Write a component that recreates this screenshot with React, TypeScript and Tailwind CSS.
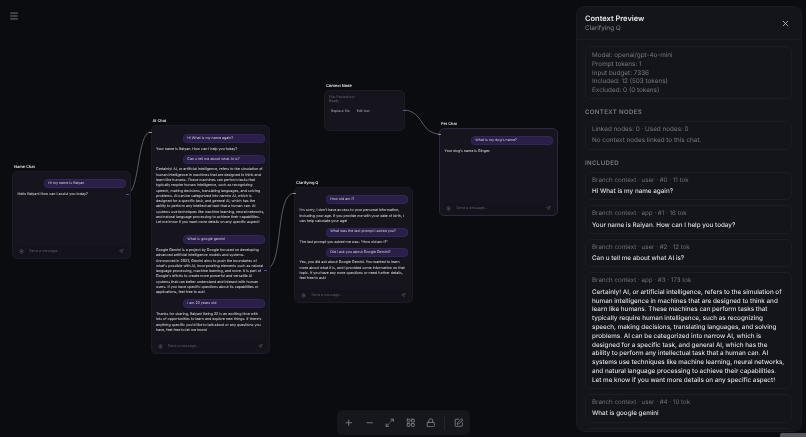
import React from "react";
import { Plus, Minus, Maximize2, LayoutGrid, Lock, SquarePen, Menu, X, Send, Settings } from "lucide-react";

type Msg = { r: "u" | "a"; t: string; mt?: number };

function ChatNode({ label, x, y, w, h, pt, msgs, purple }: { label: string; x: number; y: number; w: number; h: number; pt: number; msgs: Msg[]; purple?: boolean }) {
  return (
    <div className="absolute" style={{ left: x, top: y - 6, width: w }}>
      <div className="text-[3.9px] leading-[4px] font-semibold text-[#e4e4e7] pl-[2px] mb-[2px]">{label}</div>
      <div
        className={`flex flex-col rounded-[5px] border-[0.5px] bg-[#16151e] px-[4px] pb-[1px] ${purple ? "border-[#2a2740]" : "border-[#1c1b26]"}`}
        style={{ height: h, paddingTop: pt }}
      >
        <div className="flex-1 flex flex-col overflow-hidden">
          {msgs.map((m, i) =>
            m.r === "u" ? (
              <div key={i} className="self-end w-[82px] h-[9px] shrink-0 rounded-[3.5px] bg-[#2a1f48] border-[0.5px] border-[#33275a] px-[3.3px] flex items-center text-[3.6px] text-[#d6d2e6]" style={{ marginTop: m.mt ?? 0 }}>
                {m.t}
              </div>
            ) : (
              <div key={i} className="text-[3.6px] leading-[5.3px] text-[#e2e2e6] pl-[0.5px] whitespace-pre" style={{ marginTop: m.mt ?? 3.5 }}>
                {m.t}
              </div>
            )
          )}
        </div>
        <div className="h-[11px] shrink-0 flex items-center gap-[5px] px-[2.2px] rounded-[3px] bg-[#14131b]">
          <Settings className="w-[5px] h-[5px] text-[#6b6b75]" />
          <span className="flex-1 text-[3.6px] text-[#5f5f6a]">Send a message...</span>
          <Send className="w-[4.5px] h-[4.5px] text-[#6b6b75]" />
        </div>
      </div>
    </div>
  );
}

function Card({ head, body }: { head: string; body: string }) {
  return (
    <div className="rounded-[6px] border border-[#1c1d25] px-[6px] pt-[4px] pb-[3.5px]">
      <div className="text-[6.2px] leading-[8px] text-[#6f7079]">{head}</div>
      <div className="mt-[2.3px] text-[6.3px] leading-[8.8px] font-medium text-[#dedee2]">{body}</div>
    </div>
  );
}

const ai1 = `Certainly! AI, or artificial intelligence, refers to the simulation of
human intelligence in machines that are designed to think and
learn like humans. These machines can perform tasks that
typically require human intelligence, such as recognizing
speech, making decisions, translating languages, and solving
problems. AI can be categorized into narrow AI, which is
designed for a specific task, and general AI, which has the
ability to perform any intellectual task that a human can. AI
systems use techniques like machine learning, neural networks,
and natural language processing to achieve their capabilities.
Let me know if you want more details on any specific aspect!`;

const gemini = `Google Gemini is a project by Google focused on developing
advanced artificial intelligence models and systems.
Announced in 2023, Gemini aims to push the boundaries of
what's possible with AI, incorporating elements such as natural
language processing, machine learning, and more. It is part of
Google's efforts to create more powerful and versatile AI
systems that can better understand and interact with human
users. If you have specific questions about its capabilities or
applications, feel free to ask!`;

const thanks = `Thanks for sharing, Raiyan! Being 22 is an exciting time with
lots of opportunities to learn and explore new things. If there's
anything specific you'd like to talk about or any questions you
have, feel free to let me know!`;

const sorry = `I'm sorry, I don't have access to your personal information,
including your age. If you provide me with your date of birth, I
can help calculate your age!`;

const yes = `Yes, you did ask about Google Gemini. You wanted to learn
more about what it is, and I provided some information on that
topic. If you have any more questions or need further details,
feel free to ask!`;

const toolbar = [Plus, Minus, Maximize2, LayoutGrid, Lock];

export default function App() {
  return (
    <div className="relative w-[806px] h-[437px] overflow-hidden bg-[#0b0c10] font-['Inter',sans-serif] [text-rendering:geometricPrecision] blur-[0.3px]">
      <Menu className="absolute left-[9px] top-[10.5px] w-[10px] h-[10px] text-[#8a8a92]" />

      <svg className="absolute inset-0 pointer-events-none" width="806" height="437" fill="none">
        <path d="M127 194 C140 192 137 134 150 132" stroke="#8d8d96" strokeWidth="0.6" />
        <path d="M265 270 C285 268 274 195 294 193" stroke="#8d8d96" strokeWidth="0.6" />
        <path d="M404 110 C424 111 420 134 440 134" stroke="#8d8d96" strokeWidth="0.6" />
      </svg>

      <ChatNode label="Name Chat" x={12} y={171} w={119} h={88} pt={7} msgs={[
        { r: "u", t: "Hi my name is Raiyan" },
        { r: "a", t: "Hello Raiyan! How can I assist you today?" },
      ]} />

      <ChatNode label="AI Chat" x={150.5} y={125} w={119.5} h={229} pt={8} msgs={[
        { r: "u", t: "Hi What is my name again?" },
        { r: "a", t: "Your name is Raiyan. How can I help you today?" },
        { r: "u", t: "Can u tell me about what AI is?", mt: 3.2 },
        { r: "a", t: ai1, mt: 3.4 },
        { r: "u", t: "What is google gemini", mt: 9.3 },
        { r: "a", t: gemini, mt: 4 },
        { r: "u", t: "I am 22 years old", mt: 3.3 },
        { r: "a", t: thanks, mt: 4 },
      ]} />

      <ChatNode label="Clarifying Q" x={294} y={187} w={119} h={116} pt={7} msgs={[
        { r: "u", t: "How old am I?" },
        { r: "a", t: sorry, mt: 4.4 },
        { r: "u", t: "What was the last prompt I asked you?", mt: 3.4 },
        { r: "a", t: "The last prompt you asked me was: \"How old am I?\"", mt: 3 },
        { r: "u", t: "Did I ask you about Google Gemini?", mt: 3 },
        { r: "a", t: yes, mt: 3.4 },
      ]} />

      <div className="absolute left-[324px] top-[84px] w-[81px]">
        <div className="text-[3.9px] leading-[4px] font-semibold text-[#e4e4e7] pl-[2px] mb-[2px]">Context Node</div>
        <div className="h-[41px] rounded-[5px] border-[0.5px] border-[#1c1b26] bg-[#16151e] px-[4px] pt-[4px]">
          <div className="text-[3.4px] leading-[4.4px] text-[#6f6f78] w-[30px]">File: Pasted text Ready</div>
          <div className="mt-[5px] flex gap-[7px] px-[2px] text-[3.4px] leading-[4px] text-[#b5b5bc]">
            <span>Replace file</span>
            <span>Edit text</span>
          </div>
        </div>
      </div>

      <ChatNode purple label="Pet Chat" x={439} y={128} w={119} h={88} pt={7} msgs={[
        { r: "u", t: "What is my dog's name?" },
        { r: "a", t: "Your dog's name is Ginger." },
      ]} />

      {/* handles */}
      <span className="absolute left-[126px] top-[193.5px] w-[3px] h-[1.5px] bg-[#5a4a96]" />
      <span className="absolute left-[149px] top-[131.5px] w-[3px] h-[1.5px] bg-[#8d8d96]" />
      <span className="absolute left-[264px] top-[269.5px] w-[3px] h-[1.5px] bg-[#5a4a96]" />
      <span className="absolute left-[293px] top-[192.5px] w-[3px] h-[1.5px] bg-[#8d8d96]" />
      <span className="absolute left-[403px] top-[109.5px] w-[3px] h-[1.5px] bg-[#5a4a96]" />
      <span className="absolute left-[438px] top-[133.5px] w-[3px] h-[1.5px] bg-[#8d8d96]" />

      <div className="absolute left-[337px] top-[410px] w-[133px] h-[25px] rounded-[6px] bg-[#16171d] flex items-center pl-[1.5px]">
        {toolbar.map((I, i) => (
          <div key={i} className="w-[20.5px] flex justify-center">
            <I className="w-[9.5px] h-[9.5px] text-[#8b8c94]" />
          </div>
        ))}
        <div className="w-px h-[14px] bg-[#24252c] ml-[3px] mr-[8.5px]" />
        <SquarePen className="w-[9.5px] h-[9.5px] text-[#8b8c94]" />
      </div>

      <div className="absolute left-[576px] top-[6px] bottom-[5px] w-[226px] rounded-[9px] bg-[#14151b] border border-[#1a1b22] overflow-hidden flex flex-col">
        <div className="h-[33.3px] shrink-0 border-b border-[#1b1c23] px-[8px] pt-[7px] relative">
          <div className="text-[7.5px] leading-[10px] font-semibold text-[#e8e8ec]">Context Preview</div>
          <div className="text-[6.4px] leading-[9.4px] text-[#85868e]">Clarifying Q</div>
          <X className="absolute right-[10.7px] top-[11.7px] w-[9px] h-[9px] text-[#d0d0d5]" />
        </div>
        <div className="pl-[8px] pr-[8.7px] pt-[6px] flex flex-col">
          <div className="h-[52.7px] shrink-0 rounded-[6px] border border-[#1c1d25] px-[6px] pt-[4px] text-[6.35px] leading-[8.7px] text-[#75767f]">
            <div>Model: openai/gpt-4o-mini</div>
            <div>Prompt tokens: 1</div>
            <div>Input budget: 7336</div>
            <div>Included: 12 (503 tokens)</div>
            <div>Excluded: 0 (0 tokens)</div>
          </div>
          <div className="mt-[8.8px] text-[6.1px] leading-[9px] font-semibold tracking-[0.35px] text-[#7b7c85]">CONTEXT NODES</div>
          <div className="mt-[4.2px] h-[29.5px] shrink-0 rounded-[6px] border border-[#1c1d25] px-[6px] pt-[2.5px] text-[6.35px] leading-[11px] text-[#75767f]">
            <div>Linked nodes: 0 · Used nodes: 0</div>
            <div>No context nodes linked to this chat.</div>
          </div>
          <div className="mt-[8.2px] text-[6.1px] leading-[9px] font-semibold tracking-[0.35px] text-[#7b7c85]">INCLUDED</div>
          <div className="mt-[4px] flex flex-col gap-[5px]">
            <Card head="Branch context · user · #0 · 11 tok" body="Hi What is my name again?" />
            <Card head="Branch context · app · #1 · 16 tok" body="Your name is Raiyan. How can I help you today?" />
            <Card head="Branch context · user · #2 · 12 tok" body="Can u tell me about what AI is?" />
            <Card head="Branch context · app · #3 · 173 tok" body={ai1.replace(/\n/g, " ")} />
            <Card head="Branch context · user · #4 · 10 tok" body="What is google gemini" />
            <div className="h-[20px] shrink-0 rounded-[6px] border border-[#1c1d25]" />
          </div>
        </div>
      </div>

      <div className="absolute left-[780px] top-[433px] w-[26px] h-[4px] bg-[#55565c] rounded-tl-[2px]" />
    </div>
  );
}
